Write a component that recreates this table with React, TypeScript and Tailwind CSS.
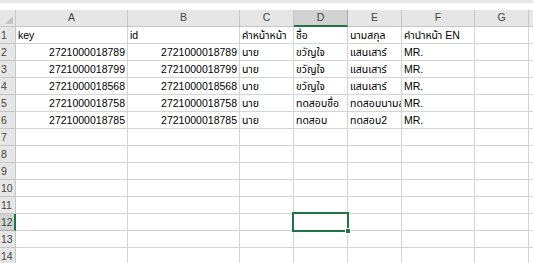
const COLS = [
  { key: "A", w: "w-[112px]" },
  { key: "B", w: "w-[112px]" },
  { key: "C", w: "w-[54px]" },
  { key: "D", w: "w-[54px]" },
  { key: "E", w: "w-[54px]" },
  { key: "F", w: "w-[73px]" },
  { key: "G", w: "w-[54px]" },
];

type Cell = { v: string; num?: boolean };

const DATA: Cell[][] = [
  [{ v: "key" }, { v: "id" }, { v: "คำหน้าหน้า" }, { v: "ชื่อ" }, { v: "นามสกุล" }, { v: "คำนำหน้า EN" }],
  [{ v: "2721000018789", num: true }, { v: "2721000018789", num: true }, { v: "นาย" }, { v: "ขวัญใจ" }, { v: "แสนเสาร์" }, { v: "MR." }],
  [{ v: "2721000018799", num: true }, { v: "2721000018799", num: true }, { v: "นาย" }, { v: "ขวัญใจ" }, { v: "แสนเสาร์" }, { v: "MR." }],
  [{ v: "2721000018568", num: true }, { v: "2721000018568", num: true }, { v: "นาย" }, { v: "ขวัญใจ" }, { v: "แสนเสาร์" }, { v: "MR." }],
  [{ v: "2721000018758", num: true }, { v: "2721000018758", num: true }, { v: "นาย" }, { v: "ทดสอบชื่อ" }, { v: "ทดสอบนามสกุล" }, { v: "MR." }],
  [{ v: "2721000018785", num: true }, { v: "2721000018785", num: true }, { v: "นาย" }, { v: "ทดสอบ" }, { v: "ทดสอบ2" }, { v: "MR." }],
];

const ROWS = 14;
const ACTIVE_COL = "D";
const ACTIVE_ROW = 12;

function HeaderRow() {
  return (
    <div className="flex h-[17px]">
      <div className="relative w-[16px] shrink-0 border-r border-b border-[#c6c6c6] bg-[#e6e6e6]">
        <svg className="absolute right-[2px] bottom-[2px]" width="8" height="8" viewBox="0 0 8 8">
          <polygon points="8,0 8,8 0,8" fill="#c4c4c4" />
        </svg>
      </div>
      {COLS.map((c) => {
        const active = c.key === ACTIVE_COL;
        return (
          <div
            key={c.key}
            className={`${c.w} shrink-0 flex items-center justify-center border-r ${
              active
                ? "bg-[#d2d2d2] border-[#ababab] border-b-2 border-b-[#217346] text-[#2b4f3a]"
                : "bg-[#e6e6e6] border-[#c6c6c6] border-b text-[#444]"
            }`}
          >
            {c.key}
          </div>
        );
      })}
      <div className="flex-1 bg-[#e6e6e6] border-b border-[#c6c6c6]" />
    </div>
  );
}

function Row({ n }: { n: number }) {
  const cells = DATA[n - 1] ?? [];
  const active = n === ACTIVE_ROW;
  return (
    <div className="flex h-[17px]">
      <div
        className={`w-[16px] shrink-0 pl-[1px] leading-[16px] border-b ${
          active
            ? "bg-[#d2d2d2] border-[#ababab] border-r-2 border-r-[#217346] text-[#2b4f3a]"
            : "bg-[#e6e6e6] border-[#c6c6c6] border-r text-[#444]"
        }`}
      >
        {n}
      </div>
      {COLS.map((c, i) => {
        const cell = cells[i];
        return (
          <div
            key={c.key}
            className={`${c.w} shrink-0 overflow-hidden whitespace-nowrap border-r border-b border-[#d4d4d4] px-[2px] leading-[16px] text-black ${
              cell?.num ? "text-right" : "text-left"
            }`}
          >
            {cell?.v}
          </div>
        );
      })}
      <div className="flex-1 border-b border-[#d4d4d4]" />
    </div>
  );
}

export default function App() {
  return (
    <div
      className="relative w-[533px] h-[263px] overflow-hidden bg-white text-[10.5px]"
      style={{ fontFamily: '"Liberation Sans", "Noto Sans Thai", Tahoma, "DejaVu Sans", sans-serif' }}
    >
      <div className="h-[3px] bg-[#e6e6e6]" />
      <div className="h-[7px]" />
      <HeaderRow />
      {Array.from({ length: ROWS }, (_, i) => (
        <Row key={i} n={i + 1} />
      ))}

      {/* active cell D12 outline and fill handle */}
      <div className="absolute left-[292px] top-[212px] w-[57px] h-[20px] border-2 border-[#217346]" />
      <div className="absolute left-[345px] top-[228px] w-[6px] h-[6px] bg-[#217346] border border-white" />
    </div>
  );
}
